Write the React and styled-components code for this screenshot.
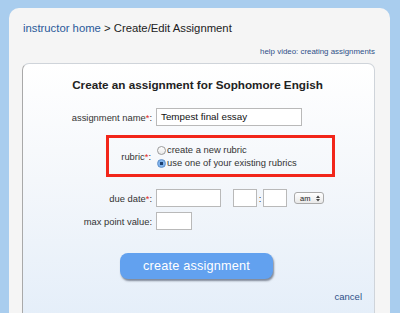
import React from "react";
import styled, { createGlobalStyle } from "styled-components";

const GlobalStyle = createGlobalStyle`
  html, body { margin: 0; padding: 0; }
  body {
    background: #a9cdee;
    font-family: "Liberation Sans", Arial, sans-serif;
    color: #333;
  }
`;

const Page = styled.div`
  width: 400px;
  height: 313px;
  overflow: hidden;
  padding: 8px 10px 0 9px;
  box-sizing: border-box;
`;

const Panel = styled.div`
  background: #f5f5f5;
  border-radius: 10px 10px 0 0;
  height: 320px;
  padding: 14px 15px 0 13px;
  box-sizing: border-box;
`;

const Crumbs = styled.div`
  font-size: 11.3px;
  color: #222;
  line-height: 13px;
  padding-left: 1px;
`;

const Link = styled.a`
  color: ${(p) => p.color || "#2b5a9a"};
  text-decoration: none;
`;

const HelpRow = styled.div`
  text-align: right;
  font-size: 7.9px;
  margin-top: 12px;
  line-height: 10px;
`;

const Card = styled.div`
  margin-top: 6px;
  border: 1px solid #cfd4da;
  border-left-color: #a9a9a9;
  border-radius: 7px;
  height: 260px;
  background: linear-gradient(#ffffff 0%, #f4f7fb 45%, #e4eef9 100%);
  padding-top: 14px;
  box-sizing: border-box;
`;

const Title = styled.h1`
  margin: 0;
  text-align: center;
  font-size: 11.7px;
  font-weight: bold;
  color: #222;
  line-height: 14px;
  padding-right: 2px;
`;

const Row = styled.div`
  display: flex;
  align-items: center;
  margin-top: ${(p) => p.top || 0}px;
`;

const Label = styled.label`
  width: ${(p) => p.width || 129}px;
  flex: none;
  text-align: right;
  font-size: 9.4px;
  color: #333;
  padding-right: 4px;
  box-sizing: content-box;
`;

const Star = styled.span`
  color: #e0261b;
`;

const TextBox = styled.div`
  width: ${(p) => p.width}px;
  height: ${(p) => p.height || 18}px;
  border: 1px solid #b9b9b9;
  background: #fff;
  box-sizing: border-box;
  font-size: 9.8px;
  color: #111;
  padding: 1px 4px;
  line-height: 14px;
  margin-left: ${(p) => p.left || 0}px;
  flex: none;
`;

const RubricBox = styled.div`
  margin: 9px 0 0 83px;
  width: 229px;
  height: 42px;
  border: 3px solid #f2261a;
  box-sizing: border-box;
  display: flex;
  align-items: center;
`;

const Options = styled.div`
  display: flex;
  flex-direction: column;
  gap: 3px;
  padding-left: 2px;
  padding-top: 1px;
`;

const Option = styled.div`
  display: flex;
  align-items: center;
  font-size: 9.4px;
  color: #333;
  line-height: 10px;
`;

const Radio = styled.span`
  width: 9px;
  height: 9px;
  border-radius: 50%;
  box-sizing: border-box;
  border: 1px solid ${(p) => (p.checked ? "#5f8fc8" : "#9a9a9a")};
  background: ${(p) =>
    p.checked
      ? "radial-gradient(circle, #1b3f70 0 1.5px, #7fb2ec 2px)"
      : "linear-gradient(#fff, #e8e8e8)"};
  margin-right: 1px;
  flex: none;
`;

const Colon = styled.span`
  font-size: 9.4px;
  width: 6px;
  text-align: center;
  flex: none;
`;

const Select = styled.div`
  margin-left: 7px;
  width: 30px;
  height: 12px;
  border: 1px solid #aaa;
  border-radius: 3px;
  background: linear-gradient(#fff, #e9e9e9);
  box-sizing: border-box;
  display: flex;
  align-items: center;
  justify-content: space-between;
  padding: 0 3px 0 5px;
  font-size: 7.5px;
  color: #222;
`;

const ButtonRow = styled.div`
  display: flex;
  justify-content: center;
  margin-top: 23px;
  padding-right: 4px;
`;

const Button = styled.button`
  width: 153px;
  height: 26px;
  border: none;
  border-radius: 8px;
  background: #62a1ef;
  color: #fff;
  font-family: "Liberation Sans", Arial, sans-serif;
  font-size: 12.7px;
  box-shadow: 1px 2px 2px rgba(40, 50, 70, 0.55);
  letter-spacing: 0.2px;
`;

const CancelRow = styled.div`
  text-align: right;
  padding-right: 12px;
  margin-top: 12px;
  font-size: 9.5px;
`;

const Arrows = () => (
  <svg width="4" height="7" viewBox="0 0 4 7">
    <path d="M0 3 L2 0.5 L4 3 Z M0 4 L2 6.5 L4 4 Z" fill="#444" />
  </svg>
);

export default function App() {
  return (
    <>
      <GlobalStyle />
      <Page>
        <Panel>
          <Crumbs>
            <Link>instructor home</Link> &gt; Create/Edit Assignment
          </Crumbs>
          <HelpRow>
            <Link color="#2f5088">help video: creating assignments</Link>
          </HelpRow>
          <Card>
            <Title>Create an assignment for Sophomore Engish</Title>
            <Row top={16}>
              <Label>
                assignment name<Star>*</Star>:
              </Label>
              <TextBox width={146}>Tempest final essay</TextBox>
            </Row>
            <RubricBox>
              <Label width={42}>
                rubric<Star>*</Star>:
              </Label>
              <Options>
                <Option>
                  <Radio />
                  create a new rubric
                </Option>
                <Option>
                  <Radio checked />
                  use one of your existing rubrics
                </Option>
              </Options>
            </RubricBox>
            <Row top={12}>
              <Label>
                due date<Star>*</Star>:
              </Label>
              <TextBox width={65} />
              <TextBox width={24} left={12} />
              <Colon>:</Colon>
              <TextBox width={24} />
              <Select>
                am <Arrows />
              </Select>
            </Row>
            <Row top={5}>
              <Label>max point value:</Label>
              <TextBox width={36} />
            </Row>
            <ButtonRow>
              <Button>create assignment</Button>
            </ButtonRow>
            <CancelRow>
              <Link color="#2f5088">cancel</Link>
            </CancelRow>
          </Card>
        </Panel>
      </Page>
    </>
  );
}
